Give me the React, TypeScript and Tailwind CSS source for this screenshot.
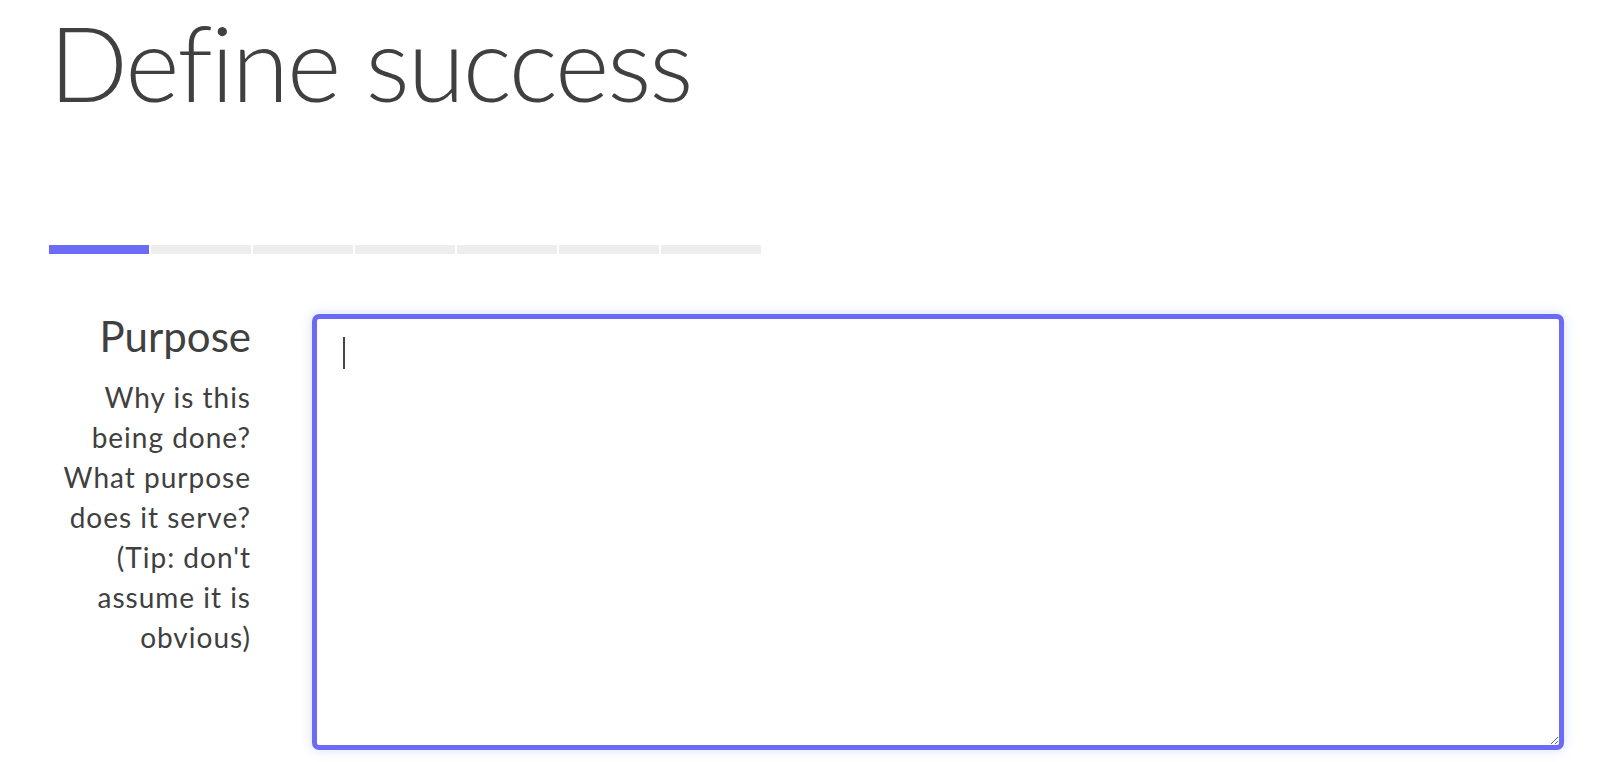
import React from 'react'

const steps = [true, false, false, false, false, false, false]

const hint = [
  'Why is this',
  'being done?',
  'What purpose',
  'does it serve?',
  "(Tip: don't",
  'assume it is',
  'obvious)',
]

const App = () => {
  return (
    <div className="min-h-screen bg-white pl-[49px] pr-[36px] font-['Lato','Open_Sans',sans-serif] text-[#404040]">
      <h1 className="pt-[10px] text-[104px] font-light leading-none tracking-[-2px]">Define success</h1>

      <div className="mt-[131px] flex gap-[2px]">
        {steps.map((done, i) => (
          <div key={i} className={done ? 'h-[9px] w-[100px] bg-[#6b6bf6]' : 'h-[9px] w-[100px] bg-[#ededed]'} />
        ))}
      </div>

      <div className="mt-[60px] flex gap-[61px]">
        <div className="w-[202px] shrink-0 text-right">
          <p className="mt-[1px] text-[42px] leading-none">Purpose</p>
          <div className="mt-[20px] text-[28px] leading-[40px] tracking-[1px]">
            {hint.map((line) => (
              <p key={line}>{line}</p>
            ))}
          </div>
        </div>

        <div className="relative flex-1">
          <textarea
            className="block h-[436px] w-full rounded-[7px] border-[5px] border-[#6b6bf6] px-[26px] py-[16px] text-[24px] caret-transparent shadow-[0_0_12px_rgba(110,150,250,0.3)] outline-none"
          />
          <span className="pointer-events-none absolute left-[31px] top-[23px] h-[32px] w-[2px] bg-[#444]" />
        </div>
      </div>
    </div>
  )
}

export default App
